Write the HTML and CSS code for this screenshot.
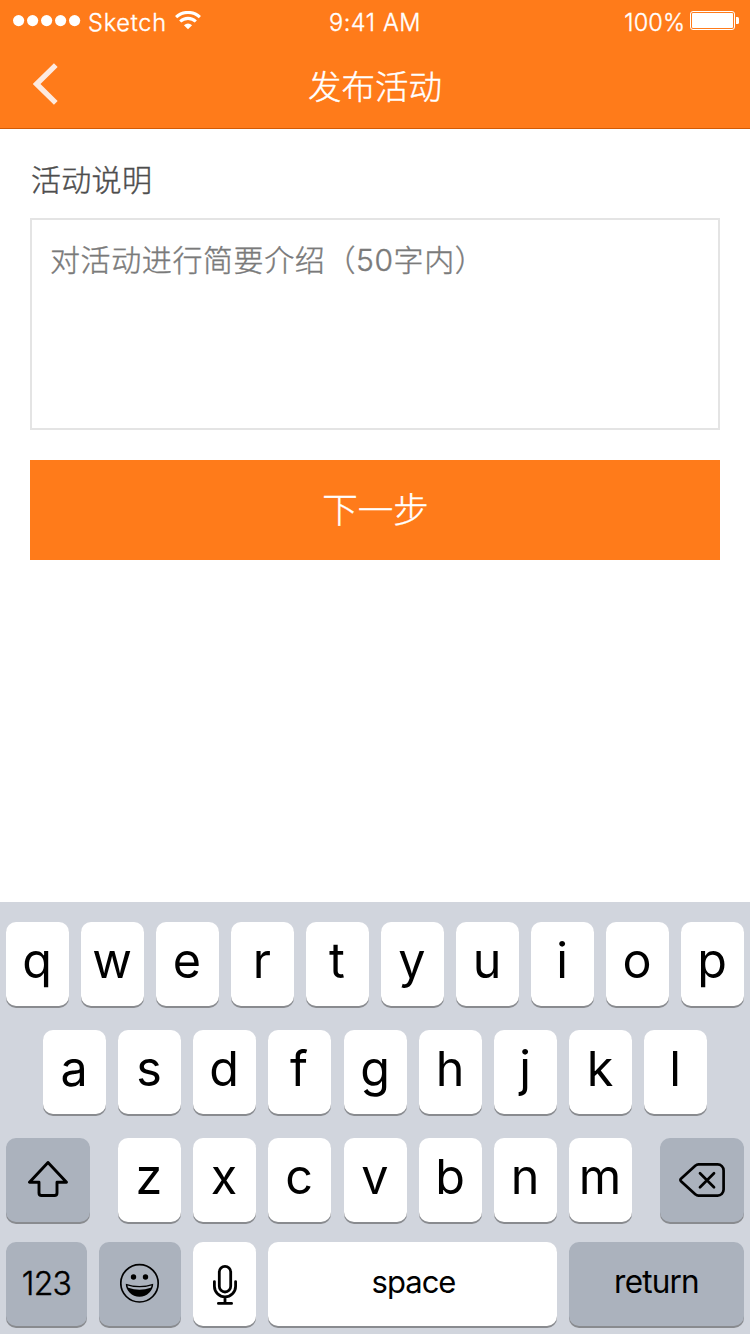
FILE: index.html
```html
<!DOCTYPE html>
<html lang="zh-CN">
<head>
<meta charset="utf-8">
<title>发布活动</title>
<link rel="stylesheet" href="styles.css">
</head>
<body>
<div class="screen">
  <header class="header">
    <div class="status">
      <div class="status-left">
        <svg class="signal" width="68" height="12" viewBox="0 0 68 12" fill="#fff"><circle cx="5.6" cy="5.600" r="5.6"/><circle cx="19.6" cy="5.600" r="5.6"/><circle cx="33.6" cy="5.600" r="5.6"/><circle cx="47.6" cy="5.600" r="5.6"/><circle cx="61.6" cy="5.600" r="5.6"/></svg>
        <span class="carrier">Sketch</span>
        <svg class="wifi" width="26" height="19" viewBox="0 0 26 19"><path d="M1.1 6.2a17.2 17.2 0 0 1 23.8 0M5.2 10.5a11.3 11.3 0 0 1 15.6 0" fill="none" stroke="#fff" stroke-width="3.1"/><path d="M8.900 14.300a6.300 6.300 0 0 1 8.200 0L13 18.300z" fill="#fff"/></svg>
      </div>
      <span class="time">9:41 AM</span>
      <div class="status-right">
        <span class="percent">100%</span>
        <svg class="battery" width="49" height="19" viewBox="0 0 49 19"><rect x=".5" y=".5" width="44" height="18" rx="2.5" fill="none" stroke="#fff"/><rect x="2" y="2" width="41" height="15" rx="1" fill="#fff"/><path d="M46 6h1.5Q49 6 49 7.500v4Q49 13 47.500 13H46z" fill="#fff"/></svg>
      </div>
    </div>
    <nav class="nav">
      <svg class="back" width="25" height="42" viewBox="0 0 25 42"><path d="M22.800 2.200 3.600 21l19.200 18.800" fill="none" stroke="#fdeae0" stroke-width="5.300"/></svg>
      <h1 class="title">发布活动</h1>
    </nav>
  </header>
  <main class="form">
    <div class="label">活动说明</div>
    <div class="field">对活动进行简要介绍（50字内）</div>
    <div class="next">下一步</div>
  </main>
  <section class="keyboard">
    <div class="row">
      <span class="key">q</span><span class="key">w</span><span class="key">e</span><span class="key">r</span><span class="key">t</span><span class="key">y</span><span class="key">u</span><span class="key">i</span><span class="key">o</span><span class="key">p</span>
    </div>
    <div class="row row-home">
      <span class="key">a</span><span class="key">s</span><span class="key">d</span><span class="key">f</span><span class="key key-mid">g</span><span class="key">h</span><span class="key">j</span><span class="key">k</span><span class="key">l</span>
    </div>
    <div class="row row-shift">
      <span class="key key-dark key-shift"><svg width="40" height="36" viewBox="0 0 40 36"><path d="M20 1.500 1.500 21.300H11V32q0 2.500 2.500 2.500h13q2.500 0 2.500-2.500V21.300h9.500z" fill="none" stroke="#000" stroke-width="2.900" stroke-linejoin="round"/></svg></span>
      <span class="key">z</span><span class="key">x</span><span class="key">c</span><span class="key key-mid">v</span><span class="key">b</span><span class="key">n</span><span class="key">m</span>
      <span class="key key-dark key-delete"><svg width="46" height="34" viewBox="0 0 46 34"><path d="M19.500 1.400H38.600a6 6 0 0 1 6 6V26.600a6 6 0 0 1-6 6H19.500q-1.800 0-3-1.200L2 18.200q-1.200-1.200 0-2.400L16.500 2.600q1.200-1.200 3-1.200z" fill="none" stroke="#000" stroke-width="2.700"/><path d="M21 10.200 35 24.200M35 10.200 21 24.200" fill="none" stroke="#000" stroke-width="2.700" stroke-linecap="round"/></svg></span>
    </div>
    <div class="row row-bottom">
      <span class="key key-dark key-num">123</span>
      <span class="key key-dark key-emoji"><svg width="40" height="40" viewBox="0 0 40 40"><circle cx="19.500" cy="20.300" r="18.700" fill="none" stroke="#000" stroke-width="1.700"/><circle cx="13.500" cy="14" r="2.700"/><circle cx="25.500" cy="14" r="2.700"/><path d="M5.800 20.700q13.700 4.500 27.400 0c.2 6.700-6.200 13-13.700 13S5.600 27.400 5.800 20.700z"/><path d="M7.400 22.500q12.100 3.700 24.200 0-.3 1.200-.9 2.200-11.200 4-22.400 0-.6-1-.9-2.200z" fill="#abb2bd"/></svg></span>
      <span class="key key-mic"><svg width="24" height="40" viewBox="0 0 24 40" fill="none" stroke="#000" stroke-width="2.800" stroke-linecap="round"><rect x="6.300" y="1.400" width="11.400" height="25.600" rx="5.700"/><path d="M1.400 16.600v4.700a10.600 10.600 0 0 0 21.200 0v-4.700M12 32v6M5.400 38.400h13.200"/></svg></span>
      <span class="key key-space">space</span>
      <span class="key key-dark key-return">return</span>
    </div>
  </section>
</div>
</body>
</html>
```

FILE: styles.css
```css
* { box-sizing: border-box; }
body {
  margin: 0;
  background: #fff;
  font-family: Inter, "Noto Sans CJK SC", sans-serif;
}
svg { display: block; flex: none; }
.screen {
  width: 750px;
  height: 1334px;
  display: flex;
  flex-direction: column;
  overflow: hidden;
}
.header {
  height: 129px;
  background: #ff7b1a;
  border-bottom: 1px solid #d25a05;
  color: #fff;
}
.status {
  height: 40px;
  display: grid;
  grid-template-columns: 1fr auto 1fr;
  font-size: 23.5px;
  font-weight: 300;
  -webkit-text-stroke: .35px currentColor;
  line-height: 28px;
  padding: 9px 11px 0 13px;
}
.status-left, .status-right { display: flex; align-items: flex-start; }
.status-right { justify-content: flex-end; }
.signal { margin: 6px 7px 0 0; }
.carrier { width: 78px; letter-spacing: .8px; white-space: nowrap; }
.wifi { margin: 2px 0 0 9px; }
.time { letter-spacing: .6px; margin-right: 2px; }
.percent { letter-spacing: .1px; }
.battery { margin: 2px 0 0 5px; }
.nav {
  height: 88px;
  display: grid;
  grid-template-columns: 100px 1fr 100px;
  padding-top: 23px;
}
.back { margin-left: 33px; }
.title {
  margin: 0;
  padding-top: 1px;
  font-size: 33.5px;
  font-weight: 300;
  line-height: 46px;
  text-align: center;
  -webkit-text-stroke: .4px currentColor;
}
.form {
  flex: 1;
  padding: 29px 30px 0;
  font-weight: 300;
  -webkit-text-stroke: .4px currentColor;
}
.label {
  height: 60px;
  padding-left: 1px;
  color: #4d4d4d;
  font-size: 30px;
  line-height: 44px;
  letter-spacing: .3px;
}
.field {
  height: 212px;
  border: 2px solid #e4e4e4;
  padding: 18px;
  color: #7a7a7a;
  font-size: 30px;
  line-height: 44px;
  letter-spacing: .6px;
}
.next {
  height: 100px;
  margin-top: 30px;
  padding: 1px 0 0 1px;
  background: #ff7b1a;
  color: #fff;
  font-size: 35.5px;
  line-height: 100px;
  text-align: center;
}
.keyboard {
  height: 432px;
  padding: 20px 6px 0;
  background: #d1d5dd;
  color: #000;
}
.row {
  height: 84px;
  display: flex;
  gap: 12px;
  margin-bottom: 24px;
}
.row-home { padding-left: 37px; }
.row-shift { margin-bottom: 20px; }
.row-bottom { margin-bottom: 0; }
.key {
  width: 63px;
  height: 84px;
  flex: none;
  display: flex;
  justify-content: center;
  border-radius: 10px;
  background: #fff;
  box-shadow: 0 2px 0 #898b8f;
  font-size: 48.500px;
  line-height: 78px;
  letter-spacing: 1px;
}
.key-mid { margin-left: 1px; }
.key-dark { background: #abb2bd; }
.key-shift { width: 84px; margin-right: 16px; padding-top: 23px; }
.key-delete { width: 84px; margin-left: 16px; padding-top: 25px; }
.key-num {
  width: 81px;
  font-size: 32px;
  font-weight: 300;
  line-height: 84px;
  letter-spacing: -.7px;
  -webkit-text-stroke: .4px currentColor;
}
.key-emoji { width: 82px; padding-top: 21px; }
.key-mic { padding-top: 23px; }
.key-space { width: 289px; padding-left: 2px; font-size: 31px; line-height: 80px; letter-spacing: -1px; }
.key-return { width: 175px; font-size: 31.500px; line-height: 80px; letter-spacing: -.8px; }
```
